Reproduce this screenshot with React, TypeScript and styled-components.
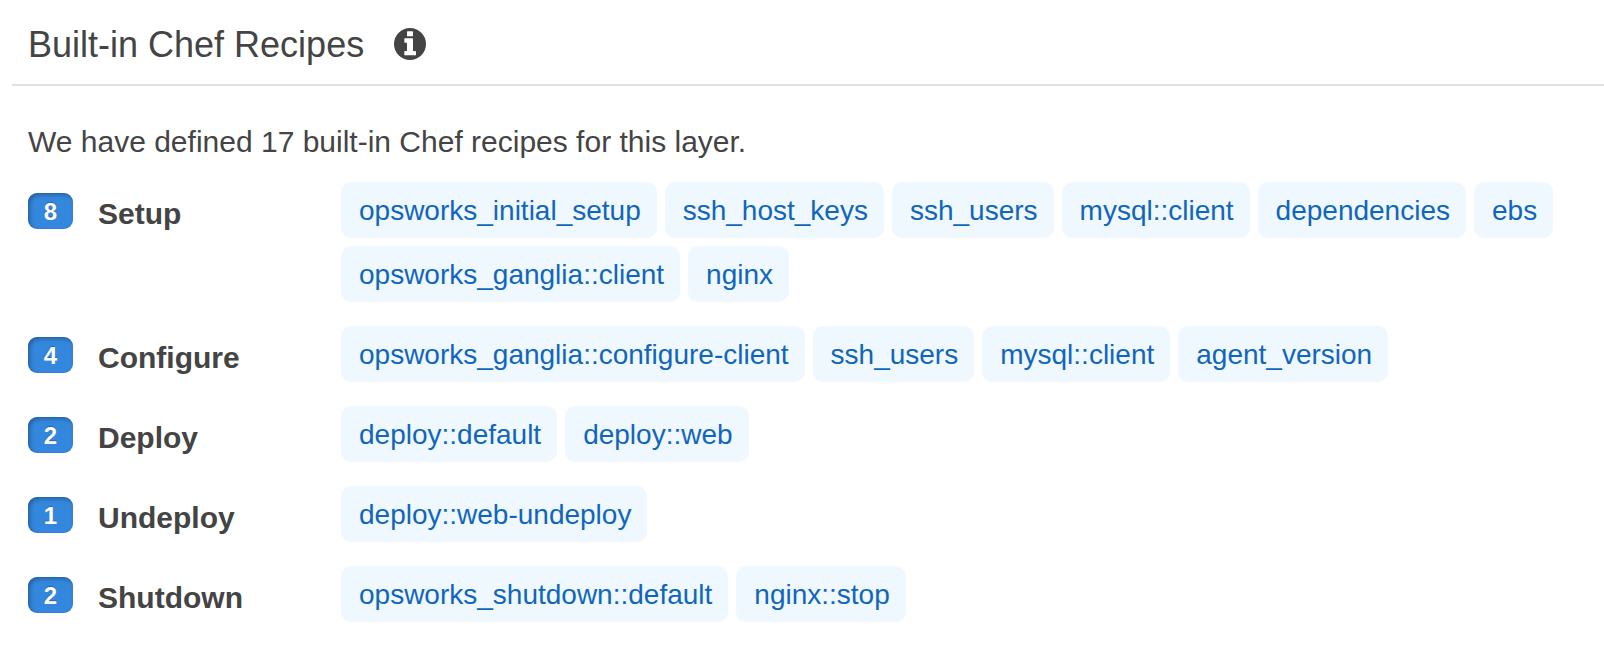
import React from "react";
import styled, { createGlobalStyle } from "styled-components";

const GlobalStyle = createGlobalStyle`
  *, *::before, *::after { box-sizing: border-box; }
  body {
    margin: 0;
    background: #fff;
    color: #444;
    font-family: "Liberation Sans", Arial, Helvetica, sans-serif;
  }
`;

const Panel = styled.section`
  padding: 0 0 32px 12px;
`;

const Header = styled.header`
  display: flex;
  align-items: center;
  gap: 30px;
  padding: 24px 16px 20px;
  border-bottom: 2px solid #e0e0e0;
`;

const Title = styled.h2`
  margin: 0;
  padding-top: 2px;
  font-size: 36px;
  line-height: 38px;
  font-weight: 400;
`;

const InfoButton = styled.button`
  display: flex;
  padding: 0;
  border: 0;
  background: none;
  color: inherit;
  cursor: pointer;
`;

const Body = styled.div`
  padding: 38px 16px 0;
`;

const Summary = styled.p`
  margin: 0 0 22px;
  font-size: 30px;
  line-height: 36px;
`;

const EventList = styled.ul`
  display: grid;
  gap: 24px;
  margin: 0;
  padding: 0;
  list-style: none;
`;

const EventRow = styled.li`
  display: grid;
  grid-template-columns: 70px 243px minmax(0, 1fr);
  align-items: start;
`;

const Count = styled.span`
  justify-self: start;
  width: 45px;
  margin-top: 11px;
  padding-top: 1px;
  border-radius: 9px;
  background: #3388dd;
  box-shadow: inset 2px 2px 4px rgba(0, 0, 0, 0.3);
  color: #fff;
  font-size: 24px;
  line-height: 35px;
  font-weight: 700;
  text-align: center;
  text-shadow: 0 -1px 1px rgba(0, 0, 0, 0.25);
`;

const EventName = styled.h3`
  margin: 14px 0 0;
  font-size: 30px;
  line-height: 36px;
  font-weight: 700;
`;

const Recipes = styled.div`
  display: flex;
  flex-wrap: wrap;
  gap: 8px;
`;

const Recipe = styled.a`
  padding: 11px 16px 9px 18px;
  border-radius: 10px;
  background: #f0f8ff;
  color: #1166bb;
  font-size: 28px;
  line-height: 36px;
  text-decoration: none;
`;

const events = [
  {
    name: "Setup",
    recipes: [
      "opsworks_initial_setup",
      "ssh_host_keys",
      "ssh_users",
      "mysql::client",
      "dependencies",
      "ebs",
      "opsworks_ganglia::client",
      "nginx",
    ],
  },
  {
    name: "Configure",
    recipes: ["opsworks_ganglia::configure-client", "ssh_users", "mysql::client", "agent_version"],
  },
  { name: "Deploy", recipes: ["deploy::default", "deploy::web"] },
  { name: "Undeploy", recipes: ["deploy::web-undeploy"] },
  { name: "Shutdown", recipes: ["opsworks_shutdown::default", "nginx::stop"] },
];

const total = events.reduce((sum, event) => sum + event.recipes.length, 0);

function InfoIcon() {
  return (
    <svg width="32" height="32" viewBox="0 0 96 96" aria-hidden="true">
      <circle cx="48" cy="48" r="48" fill="currentColor" />
      <path
        fill="#fff"
        d="M41 10h14q2 0 2 2v11q0 2-2 2H41q-2 0-2-2V12q0-2 2-2zM33 31h22q2 0 2 2v36h7q2 0 2 2v9q0 2-2 2H33q-2 0-2-2v-9q0-2 2-2h6V44h-6q-2 0-2-2v-9q0-2 2-2z"
      />
    </svg>
  );
}

export default function App() {
  return (
    <>
      <GlobalStyle />
      <Panel>
        <Header>
          <Title>Built-in Chef Recipes</Title>
          <InfoButton type="button" aria-label="About built-in Chef recipes">
            <InfoIcon />
          </InfoButton>
        </Header>
        <Body>
          <Summary>We have defined {total} built-in Chef recipes for this layer.</Summary>
          <EventList>
            {events.map((event) => (
              <EventRow key={event.name}>
                <Count>{event.recipes.length}</Count>
                <EventName>{event.name}</EventName>
                <Recipes>
                  {event.recipes.map((recipe) => (
                    <Recipe key={recipe} href={`#${recipe}`}>
                      {recipe}
                    </Recipe>
                  ))}
                </Recipes>
              </EventRow>
            ))}
          </EventList>
        </Body>
      </Panel>
    </>
  );
}
